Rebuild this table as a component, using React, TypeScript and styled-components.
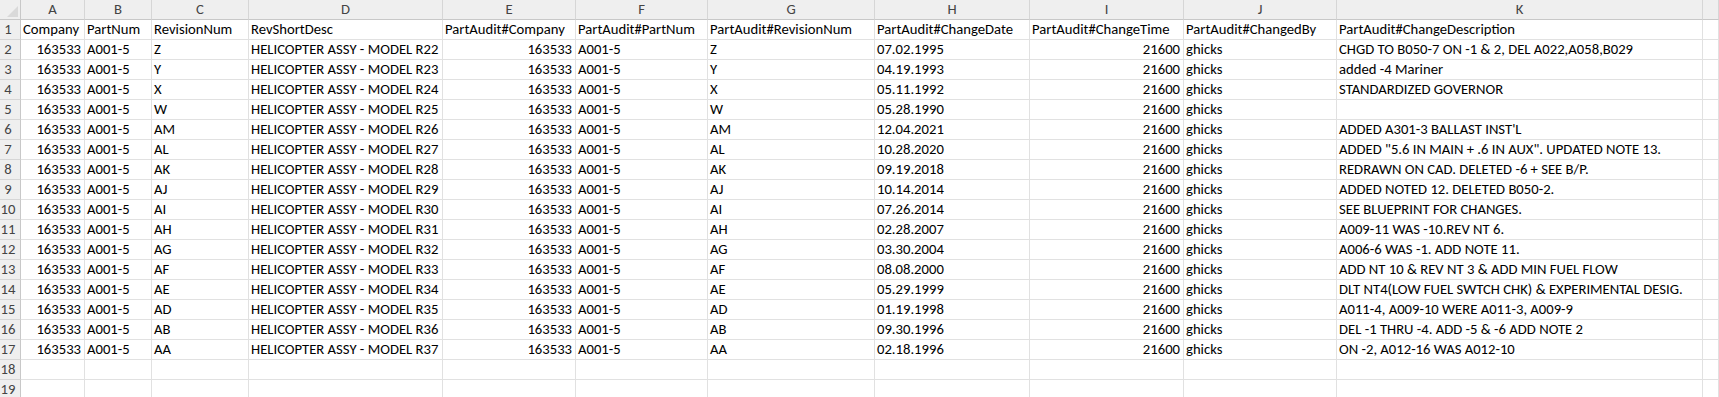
import React from "react";
import styled, { createGlobalStyle } from "styled-components";

const GlobalStyle = createGlobalStyle`
  html, body { margin: 0; padding: 0; background: #ffffff; overflow: hidden; }
  #root { width: 1719px; height: 397px; overflow: hidden; }
`;

const COLS = [64, 67, 97, 194, 133, 132, 167, 155, 154, 153, 366];
const LETTERS = ["A", "B", "C", "D", "E", "F", "G", "H", "I", "J", "K", "L"];

const Sheet = styled.div`
  display: grid;
  grid-template-columns: 21px ${COLS.map((c) => `${c}px`).join(" ")} 1fr;
  grid-auto-rows: 20px;
  width: 1719px;
  font-family: Carlito, Calibri, Lato, "Liberation Sans", sans-serif;
  font-size: 14.67px;
  color: #000;
`;

const Corner = styled.div`
  position: relative;
  background: #efefef;
  border-right: 1px solid #c8c8c8;
  border-bottom: 1px solid #c8c8c8;
  box-sizing: border-box;
`;

const CornerMark = styled.svg`
  position: absolute;
  right: 2px;
  bottom: 2px;
`;

const ColHead = styled.div`
  background: #efefef;
  border-right: 1px solid #d6d6d6;
  border-bottom: 1px solid #c8c8c8;
  box-sizing: border-box;
  color: #444;
  text-align: center;
  line-height: 19px;
  overflow: hidden;
  white-space: nowrap;
`;

const RowHead = styled.div`
  background: #efefef;
  border-right: 1px solid #c8c8c8;
  border-bottom: 1px solid #d6d6d6;
  box-sizing: border-box;
  color: #444;
  text-align: center;
  padding-right: 4px;
  line-height: 19px;
  white-space: nowrap;
`;

const Cell = styled.div<{ $num?: boolean }>`
  border-right: 1px solid #e1e1e1;
  border-bottom: 1px solid #e1e1e1;
  box-sizing: border-box;
  padding: 0 3px 0 2px;
  line-height: 19px;
  white-space: nowrap;
  overflow: visible;
  text-align: ${(p) => (p.$num ? "right" : "left")};
`;

const HEADERS = [
  "Company",
  "PartNum",
  "RevisionNum",
  "RevShortDesc",
  "PartAudit#Company",
  "PartAudit#PartNum",
  "PartAudit#RevisionNum",
  "PartAudit#ChangeDate",
  "PartAudit#ChangeTime",
  "PartAudit#ChangedBy",
  "PartAudit#ChangeDescription",
];

const REVS = ["Z", "Y", "X", "W", "AM", "AL", "AK", "AJ", "AI", "AH", "AG", "AF", "AE", "AD", "AB", "AA"];
const DATES = [
  "07.02.1995",
  "04.19.1993",
  "05.11.1992",
  "05.28.1990",
  "12.04.2021",
  "10.28.2020",
  "09.19.2018",
  "10.14.2014",
  "07.26.2014",
  "02.28.2007",
  "03.30.2004",
  "08.08.2000",
  "05.29.1999",
  "01.19.1998",
  "09.30.1996",
  "02.18.1996",
];
const DESCS = [
  "CHGD TO B050-7 ON -1 & 2, DEL A022,A058,B029",
  "added -4 Mariner",
  "STANDARDIZED GOVERNOR",
  "",
  "ADDED A301-3 BALLAST INST'L",
  'ADDED "5.6 IN MAIN + .6 IN AUX". UPDATED NOTE 13.',
  "REDRAWN ON CAD. DELETED -6 + SEE B/P.",
  "ADDED NOTED 12. DELETED B050-2.",
  "SEE BLUEPRINT FOR CHANGES.",
  "A009-11 WAS -10.REV NT 6.",
  "A006-6 WAS -1. ADD NOTE 11.",
  "ADD NT 10 & REV NT 3 & ADD MIN FUEL FLOW",
  "DLT NT4(LOW FUEL SWTCH CHK) & EXPERIMENTAL DESIG.",
  "A011-4, A009-10 WERE A011-3, A009-9",
  "DEL -1 THRU -4. ADD -5 & -6 ADD NOTE 2",
  "ON -2, A012-16 WAS A012-10",
];

type Row = { values: string[]; num: boolean[] };

const NUMCOLS = [true, false, false, false, true, false, false, false, true, false, false, false];

const rows: Row[] = [
  { values: [...HEADERS, ""], num: new Array(12).fill(false) },
  ...REVS.map((rev, i) => ({
    values: [
      "163533",
      "A001-5",
      rev,
      `HELICOPTER ASSY - MODEL R${22 + i}`,
      "163533",
      "A001-5",
      rev,
      DATES[i],
      "21600",
      "ghicks",
      DESCS[i],
      "",
    ],
    num: NUMCOLS,
  })),
  { values: new Array(12).fill(""), num: NUMCOLS },
  { values: new Array(12).fill(""), num: NUMCOLS },
];

export default function App() {
  return (
    <>
      <GlobalStyle />
      <Sheet>
        <Corner>
          <CornerMark width="11" height="11" viewBox="0 0 11 11">
            <polygon points="11,0 11,11 0,11" fill="#d9d9d9" />
          </CornerMark>
        </Corner>
        {LETTERS.map((l) => (
          <ColHead key={l}>{l === "L" ? "" : l}</ColHead>
        ))}
        {rows.map((row, r) => (
          <React.Fragment key={r}>
            <RowHead>{r + 1}</RowHead>
            {row.values.map((v, c) => (
              <Cell key={c} $num={row.num[c]}>
                {v}
              </Cell>
            ))}
          </React.Fragment>
        ))}
      </Sheet>
    </>
  );
}
